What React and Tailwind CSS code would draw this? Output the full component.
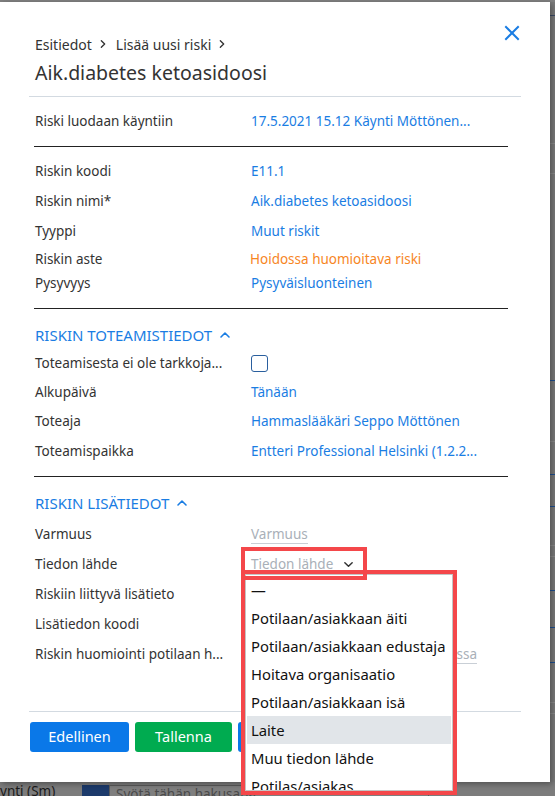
import React from "react";

const BLUE = "text-[#1a7de3]";

function Chevron({ className = "", dir = "right" }) {
  const d = dir === "right" ? "M4 2l4 4-4 4" : dir === "up" ? "M2 8l4-4 4 4" : "M2 4l4 4 4-4";
  return (
    <svg viewBox="0 0 12 12" className={className} fill="none" stroke="currentColor" strokeWidth="1.6" strokeLinecap="round" strokeLinejoin="round">
      <path d={d} />
    </svg>
  );
}

function Row({ label, h = "h-[30px]", children }) {
  return (
    <div className={`flex items-center ${h}`}>
      <div className="w-[217px] shrink-0 whitespace-nowrap pl-[1px] pr-[18px] text-[#333]">{label}</div>
      <div className="relative min-w-0 w-[232px]">{children}</div>
    </div>
  );
}

function Value({ children, color = BLUE }) {
  return <div className={`whitespace-nowrap ${color}`}>{children}</div>;
}

function Placeholder({ children }) {
  return <span className="border-b border-[#c9cfd6] text-[#a9b0b8]">{children}</span>;
}

function SectionHeader({ children }) {
  return (
    <div className={`flex h-[30px] items-center gap-[7px] pl-[1px] text-[15px] ${BLUE}`}>
      <span>{children}</span>
      <Chevron dir="up" className="h-[12px] w-[12px]" />
    </div>
  );
}

const options = [
  "—",
  "Potilaan/asiakkaan äiti",
  "Potilaan/asiakkaan edustaja",
  "Hoitava organisaatio",
  "Potilaan/asiakkaan isä",
  "Laite",
  "Muu tiedon lähde",
  "Potilas/asiakas",
];

function SourceSelect() {
  return (
    <>
      <div className="flex items-center gap-[10px] text-[#a9b0b8]">
        <span>Tiedon lähde</span>
        <Chevron dir="down" className="h-[11px] w-[11px] text-[#333]" />
      </div>
      {/* highlighted select box */}
      <div className="pointer-events-none absolute left-[-10px] top-[-7px] z-20 h-[33px] w-[126px] border-4 border-[#f4474a]" />
      {/* open option list */}
      <div className="absolute left-[-10px] top-[16px] z-10 h-[225px] w-[216px] overflow-hidden border-4 border-[#f4474a] bg-white">
        <div className="h-full overflow-hidden border border-[#c4c4c4] p-[1px] text-[14.8px] text-[#111]">
          {options.map((o) => (
            <div key={o} className={`flex h-[28px] items-center whitespace-nowrap px-[4px] ${o === "Laite" ? "bg-[#e1e5e9]" : ""}`}>
              {o}
            </div>
          ))}
        </div>
      </div>
    </>
  );
}

export default function App() {
  return (
    <div className="relative h-[796px] w-[555px] overflow-hidden bg-[#7c7c7c] font-['Noto_Sans',sans-serif] text-[13.5px]">
      {/* dimmed page behind the dialog */}
      <div className="h-[2px] bg-[#808080]" />
      <div className="flex">
        <div className="relative z-10 h-[780px] w-[550px] shrink-0 bg-white px-[29px] shadow-[2px_2px_6px_rgba(0,0,0,0.35)]">
          {/* header */}
          <div className="relative pt-[32px]">
            <button className="absolute right-[1px] top-[23px] text-[#1a7de3]">
              <svg viewBox="0 0 16 16" className="h-[16px] w-[16px]" fill="none" stroke="currentColor" strokeWidth="2" strokeLinecap="square">
                <path d="M2 2l12 12M14 2L2 14" />
              </svg>
            </button>
            <div className="flex h-[20px] items-center gap-[6px] pl-[6px] text-[14px] text-[#333]">
              <span>Esitiedot</span>
              <Chevron className="h-[10px] w-[10px]" />
              <span className="ml-[2px]">Lisää uusi riski</span>
              <Chevron className="h-[10px] w-[10px]" />
            </div>
            <div className="mt-[4px] flex h-[30px] items-center pl-[6px] text-[19.5px] text-[#333]">
              Aik.diabetes ketoasidoosi
            </div>
          </div>
          <div className="mt-[8px] h-px bg-[#d3dae1]" />

          <div className="ml-[5px] mr-[13px]">
            <div className="mt-[9px]">
              <Row label="Riski luodaan käyntiin">
                <Value>17.5.2021 15.12 Käynti Möttönen...</Value>
              </Row>
            </div>
            <div className="mt-[10px] h-px bg-[#222]" />

            <div className="mt-[9px]">
              <Row label="Riskin koodi"><Value>E11.1</Value></Row>
              <Row label="Riskin nimi*"><Value>Aik.diabetes ketoasidoosi</Value></Row>
              <Row label="Tyyppi"><Value>Muut riskit</Value></Row>
              <Row label="Riskin aste" h="h-[26px]">
                <Value color="text-[#f7861f]">
                  <span className="-ml-[1px]">Hoidossa huomioitava riski</span>
                </Value>
              </Row>
              <Row label="Pysyvyys" h="h-[22px]"><Value>Pysyväisluonteinen</Value></Row>
            </div>
            <div className="mt-[14px] h-px bg-[#222]" />

            <div className="mt-[11px]">
              <SectionHeader>RISKIN TOTEAMISTIEDOT</SectionHeader>
              <Row label="Toteamisesta ei ole tarkkoja..." h="h-[27px]">
                <div className="h-[17px] w-[17px] rounded-[3px] border-[1.5px] border-[#2a5f9e] bg-white" />
              </Row>
              <Row label="Alkupäivä"><Value>Tänään</Value></Row>
              <Row label="Toteaja" h="h-[29px]"><Value>Hammaslääkäri Seppo Möttönen</Value></Row>
              <Row label="Toteamispaikka"><Value>Entteri Professional Helsinki (1.2.2...</Value></Row>
            </div>
            <div className="mt-[10px] h-px bg-[#222]" />

            <div className="mt-[11px]">
              <SectionHeader>RISKIN LISÄTIEDOT</SectionHeader>
              <div className="mt-[1px]">
                <Row label="Varmuus"><Placeholder>Varmuus</Placeholder></Row>
                <Row label="Tiedon lähde"><SourceSelect /></Row>
                <Row label="Riskiin liittyvä lisätieto"><Placeholder>Riskiin liittyvä lisätieto</Placeholder></Row>
                <Row label="Lisätiedon koodi"><Placeholder>Lisätiedon koodi</Placeholder></Row>
                <Row label="Riskin huomiointi potilaan h...">
                  <div className="whitespace-nowrap"><Placeholder>Riskin huomiointi potilaan hoidossa</Placeholder></div>
                </Row>
              </div>
            </div>
          </div>

          <div className="mt-[42px] h-px bg-[#d3dae1]" />
          {/* footer buttons */}
          <div className="mt-[10px] flex gap-[6px] pl-[1px] text-[14.5px] text-white">
            <button className="h-[30px] w-[99px] rounded-[3px] bg-[#0a78e8]">Edellinen</button>
            <button className="h-[30px] w-[97px] rounded-[3px] bg-[#00ab50]">Tallenna</button>
            <button className="h-[30px] w-[100px] rounded-[3px] bg-[#0a78e8]">Seuraava</button>
          </div>
        </div>

        {/* right edge of the page behind */}
        <div className="relative h-[780px] w-[5px] bg-[#7a7a7a]">
          <div className="absolute left-0 top-[13px] h-px w-full bg-[#3a4a66]" />
          <div className="absolute left-0 top-[141px] h-px w-full bg-[#8a8a8a]" />
          <div className="absolute left-0 top-[171px] h-px w-full bg-[#8a8a8a]" />
          <div className="absolute left-0 top-[378px] h-px w-full bg-[#1d4f91]" />
          <div className="absolute left-0 top-[439px] h-px w-full bg-[#8a8a8a]" />
          <div className="absolute left-0 top-[472px] h-px w-full bg-[#1d4f91]" />
          <div className="absolute left-0 top-[504px] h-px w-full bg-[#1d4f91]" />
          <div className="absolute left-0 top-[543px] h-px w-full bg-[#8a8a8a]" />
          <div className="absolute left-0 top-[554px] h-px w-full bg-[#8a8a8a]" />
          <div className="absolute left-0 top-[588px] h-px w-full bg-[#1d4f91]" />
          <div className="absolute left-0 top-[625px] h-px w-full bg-[#1d4f91]" />
          <div className="absolute left-0 top-[660px] h-px w-full bg-[#1d4f91]" />
          <div className="absolute left-0 top-[700px] h-px w-full bg-[#8a8a8a]" />
          <div className="absolute left-0 top-[711px] h-px w-full bg-[#8a8a8a]" />
        </div>
      </div>

      {/* bottom edge of the page behind */}
      <div className="flex h-[14px] items-start pt-[3px] text-[13.5px] leading-[16px] text-[#1a1a1a]">
        <span className="w-[82px] -translate-y-[2px] pl-0">ynti (Sm)</span>
        <div className="h-[14px] w-[27px] bg-[#1c3a6b]" />
        <div className="h-[14px] w-[320px] border border-[#5a5a5a] bg-[#7f7f7f] pl-[6px] text-[#4a4a4a]">Syötä tähän hakusana</div>
      </div>
    </div>
  );
}
